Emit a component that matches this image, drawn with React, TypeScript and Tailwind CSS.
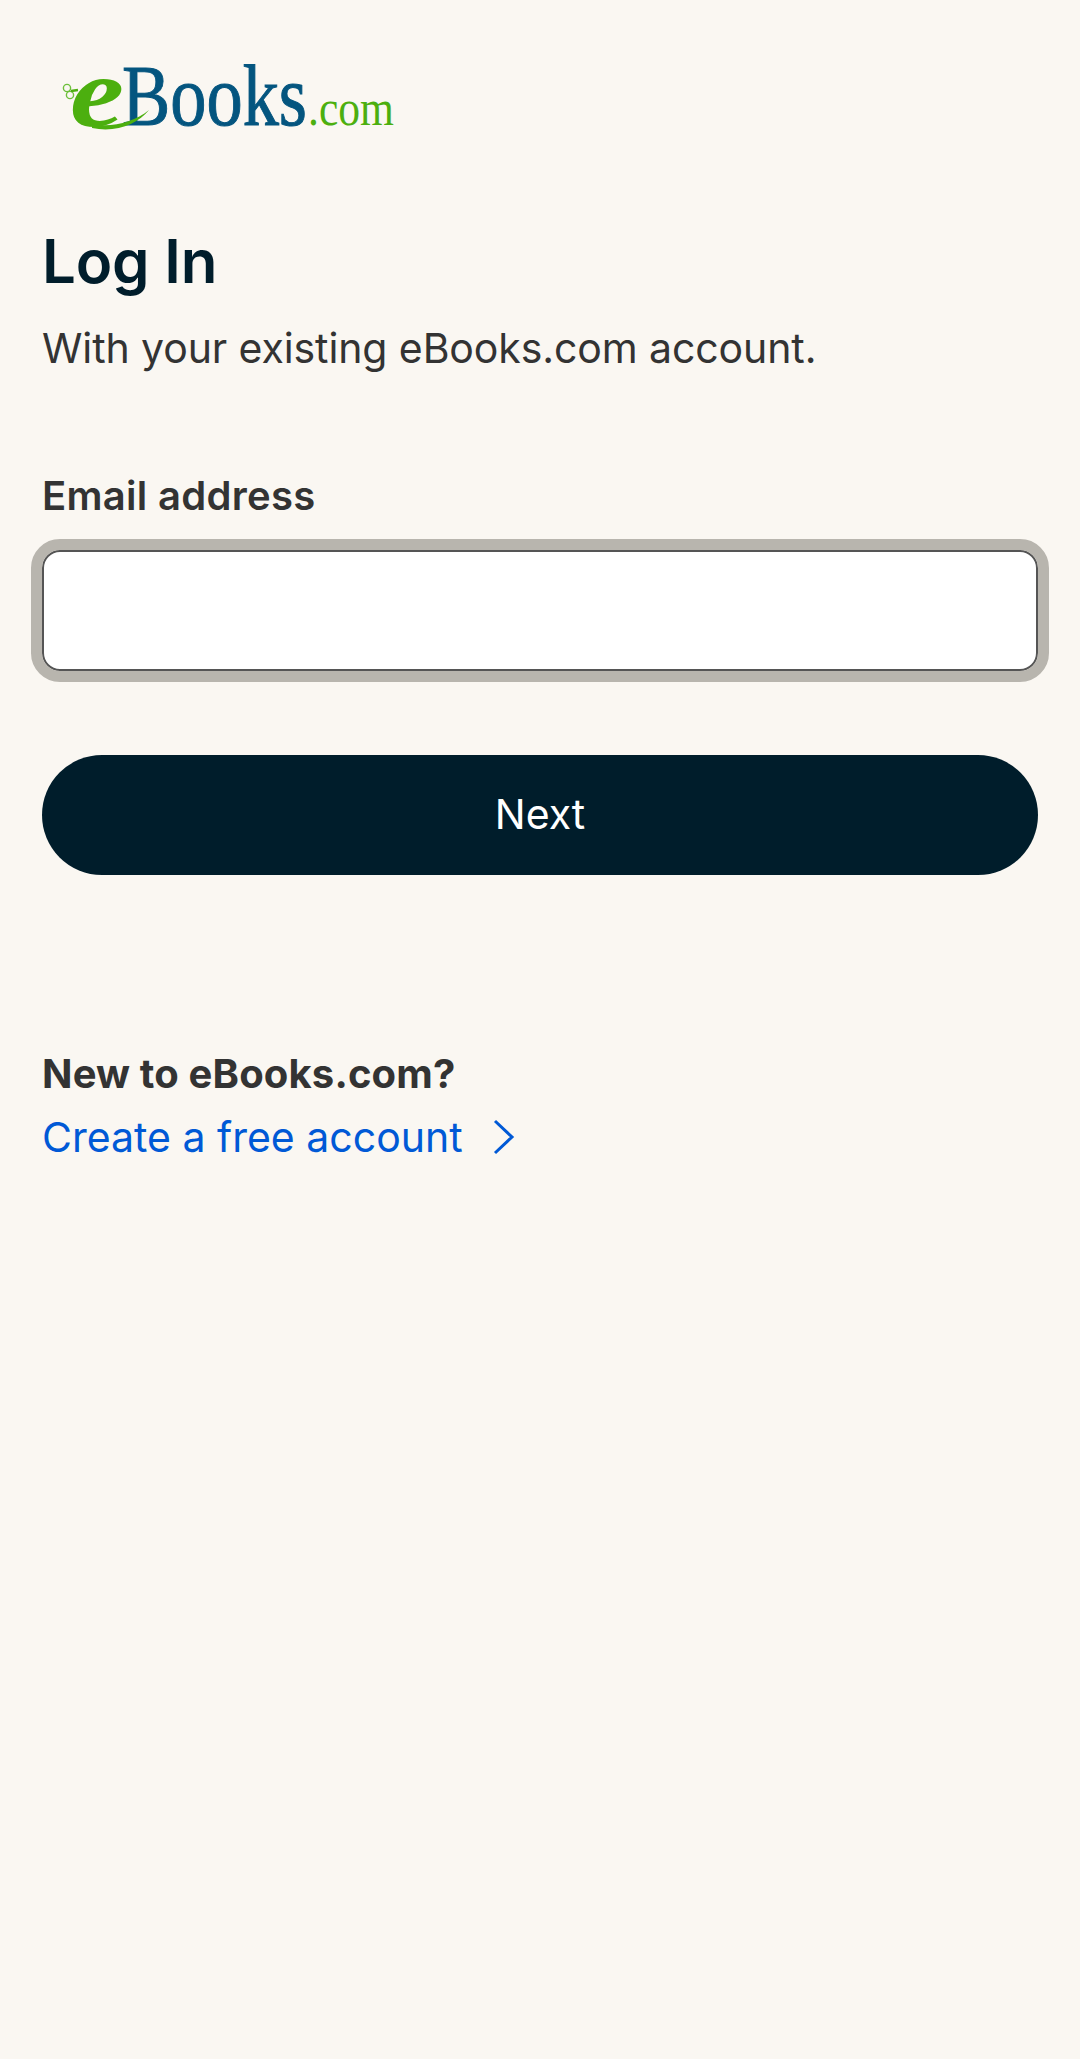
export default function App() {
  return (
    <div className="min-h-[2059px] bg-[#faf7f2] px-[42px] text-[#333333] font-['Inter','Liberation_Sans',sans-serif]">
      <svg className="block ml-[8px] pt-[30px] box-content" width="360" height="110" viewBox="0 -10 360 110" aria-label="eBooks.com">
        <text x="20" y="86" fontFamily="'Liberation Serif',serif" fontSize="100" fontStyle="italic" fontWeight="700" fill="#4caf0f" textLength="54" lengthAdjust="spacingAndGlyphs">e</text>
        <text x="72" y="85" fontFamily="'Liberation Serif',serif" fontSize="86" fill="#04557f" stroke="#04557f" strokeWidth="1" textLength="185" lengthAdjust="spacingAndGlyphs">Books</text>
        <text x="258" y="85" fontFamily="'Liberation Serif',serif" fontSize="50" fill="#4caf0f" textLength="86" lengthAdjust="spacingAndGlyphs">.com</text>
        <path d="M42 84 C62 88 84 82 99 70 C88 84 66 93 42 88Z" fill="#4caf0f" />
        <circle cx="17" cy="48" r="3.6" fill="none" stroke="#6cbf3a" strokeWidth="1.4" />
        <circle cx="20" cy="55" r="3.6" fill="none" stroke="#6cbf3a" strokeWidth="1.4" />
        <path d="M21 51 L28 50" stroke="#4caf0f" strokeWidth="2.5" />
      </svg>
      <h1 className="mt-[85px] text-[60px] leading-[72px] font-semibold text-[#001d2b] tracking-[-0.2px]">Log In</h1>
      <p className="mt-[23px] text-[41px] leading-[56px] tracking-[-0.1px]">With your existing eBooks.com account.</p>
      <label className="block mt-[96px] text-[40px] leading-[48px] font-semibold tracking-[0.3px]">Email address</label>
      <input className="block mt-[30px] w-full h-[121px] rounded-[18px] border-[2px] border-[#555555] bg-white outline-[11px] outline-[#b8b5ae] outline-offset-0" />
      <button className="block mt-[84px] w-full h-[120px] rounded-[60px] bg-[#001d2b] text-white text-[41px]">Next</button>
      <p className="mt-[173px] text-[40px] leading-[52px] font-bold tracking-[0.15px]">New to eBooks.com?</p>
      <a className="mt-[11px] flex items-center gap-[30px] text-[41px] leading-[52px] text-[#0059d6]">
        Create a free account
        <svg width="22" height="36" viewBox="0 0 22 36" fill="none" stroke="#0059d6" strokeWidth="3"><path d="M2 2 L19 18 L2 34" /></svg>
      </a>
    </div>
  );
}
